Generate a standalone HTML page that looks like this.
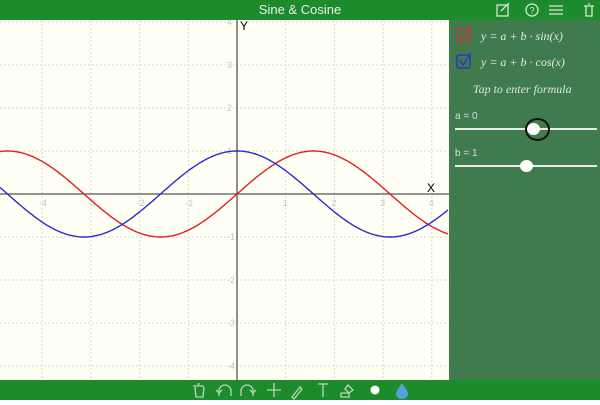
<!DOCTYPE html>
<html><head><meta charset="utf-8"><style>
body{margin:0;width:600px;height:400px;overflow:hidden;font-family:"Liberation Sans",sans-serif;background:#fff}
#top{position:absolute;left:0;top:0;width:600px;height:20px;background:#1d8a2c;color:#e8f0e8;font-size:13px;text-align:center;line-height:20px}
#bot{position:absolute;left:0;top:380px;width:600px;height:20px;background:#1d8a2c}
#panel{position:absolute;left:449px;top:20px;width:151px;height:360px;background:#3f7b4c;color:#e6ece6}
.f{position:absolute;left:32px;font-family:"Liberation Serif",serif;font-style:italic;font-size:12px}
.lab{position:absolute;left:6px;font-size:10px;color:#dde}
.line{position:absolute;left:6px;width:142px;height:2px;background:#e8ece8}
.knob{position:absolute;width:13px;height:12px;border-radius:50%;background:#fff}
</style></head><body>
<svg id="g" width="449" height="360" style="position:absolute;left:0;top:20px;background:#fffff6"></svg>
<div id="top">Sine &amp; Cosine
<svg width="600" height="20" style="position:absolute;left:0;top:0">
<g fill="none" stroke="#d8e8d8" stroke-width="1.3">
<rect x="497" y="5" width="11" height="11"/><path d="M501 11 L509 3"/>
<circle cx="532" cy="10" r="6"/>
<path d="M549 6h14M549 10h14M549 14h14"/>
<path d="M584 6h10M586 6v10h6v-10M588 4h2"/>
</g>
<text x="532" y="13.5" fill="#d8e8d8" font-size="9" text-anchor="middle">?</text>
</svg></div>
<div id="panel">
<svg width="30" height="60" style="position:absolute;left:0;top:0">
<rect x="8" y="9" width="13" height="13" rx="2" fill="none" stroke="#c33" stroke-width="1.5"/>
<path d="M10 14l4 5 8-12" fill="none" stroke="#c33" stroke-width="1.3"/>
<rect x="8" y="35" width="13" height="13" rx="2" fill="none" stroke="#33c" stroke-width="1.5"/>
<path d="M10 40l4 5 8-12" fill="none" stroke="#33c" stroke-width="1.3"/>
</svg>
<div class="f" style="top:9px">y = a + b · sin(x)</div>
<div class="f" style="top:35px">y = a + b · cos(x)</div>
<div class="f" style="top:62px;left:24px;color:#dde8dd">Tap to enter formula</div>
<div class="lab" style="top:91px">a = 0</div>
<div class="line" style="top:108px"></div>
<div class="knob" style="left:78px;top:103px"></div>
<div style="position:absolute;left:76px;top:98px;width:21px;height:19px;border:2px solid #111;border-radius:50%"></div>
<div class="lab" style="top:128px">b = 1</div>
<div class="line" style="top:145px"></div>
<div class="knob" style="left:71px;top:140px"></div>
</div>
<div id="bot"><svg width="600" height="20">
<g fill="none" stroke="#b8d8b8" stroke-width="1.3">
<path d="M193 6h11M195 7l1 10h7l1-10M197 4h3"/>
<path d="M219 16v-5a6 6 0 0 1 12 0v5M216 10l3 3 3-3"/>
<path d="M241 16v-5a6 6 0 0 1 12 0v5M250 10l3 3 3-3"/>
<path d="M274 3v14M267 10h14"/>
<path d="M292 17l8-10 2 2-8 10z"/>
<path d="M318 4h10M323 4v13"/>
<path d="M341 13h8v4h-8zM348 5l5 5-4 3-4-4z"/>
</g>
<circle cx="375" cy="10" r="4.5" fill="#fff"/>
<path d="M402 3q6 8 6 11a6 5 0 0 1-12 0q0-3 6-11z" fill="#5aa0d8"/>
</svg></div>
<script>
var s=document.getElementById('g'),ox=237,oy=174,ux=48.7,uy=43,h='';
for(var i=-4;i<=4;i++){var x=ox+i*ux;h+='<line x1="'+x+'" y1="0" x2="'+x+'" y2="360" stroke="#d8d8d8" stroke-dasharray="2,2"/>';
if(i)h+='<text x="'+(x-3)+'" y="'+(oy+12)+'" font-size="9" fill="#b8c8d0">'+i+'</text>';}
for(var j=-4;j<=4;j++){var y=oy-j*uy;h+='<line x1="0" y1="'+y+'" x2="449" y2="'+y+'" stroke="#d8d8d8" stroke-dasharray="2,2"/>';
if(j)h+='<text x="'+(ox-10)+'" y="'+(y+3)+'" font-size="9" fill="#b8c8d0">'+j+'</text>';}
h+='<line x1="0" y1="'+oy+'" x2="449" y2="'+oy+'" stroke="#555" stroke-width="1.3"/><line x1="'+ox+'" y1="0" x2="'+ox+'" y2="360" stroke="#555" stroke-width="1.3"/>';
h+='<text x="240" y="10" font-size="12">Y</text><text x="427" y="172" font-size="12">X</text>';
function p(f,c){var d='';for(var x=0;x<=449;x+=2){var v=f((x-ox)/ux);d+=(x?'L':'M')+x+' '+(oy-v*uy).toFixed(1);}return '<path d="'+d+'" fill="none" stroke="'+c+'" stroke-width="1.4"/>';}
h+=p(Math.sin,'#e02020')+p(Math.cos,'#2a2ad0');
s.innerHTML=h;
</script>
</body></html>
